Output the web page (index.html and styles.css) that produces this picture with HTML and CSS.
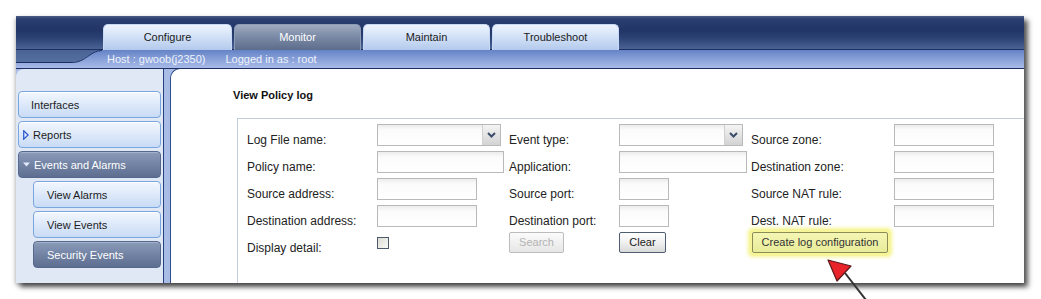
FILE: index.html
```html
<!DOCTYPE html>
<html>
<head>
<meta charset="utf-8">
<title>View Policy log</title>
<link rel="stylesheet" href="styles.css">
</head>
<body>
<div class="page">
  <div class="window">
    <div class="header">
      <div class="tab tab-light tab-w1">Configure</div>
      <div class="tab tab-dark tab-w2">Monitor</div>
      <div class="tab tab-light tab-w3">Maintain</div>
      <div class="tab tab-light tab-w3">Troubleshoot</div>
    </div>
    <div class="subbar">
      <svg class="notch" width="92" height="19" viewBox="0 0 92 19">
        <defs>
          <linearGradient id="ng" x1="0" y1="0" x2="0" y2="1">
            <stop offset="0" stop-color="#4a6395"/>
            <stop offset="1" stop-color="#566fa2"/>
          </linearGradient>
        </defs>
        <path d="M0 0 H86 C74 0 70 12 56 12 H0 Z" fill="url(#ng)"/>
        <path d="M86 0.5 C74 0.5 70 12.5 56 12.5 H0" fill="none" stroke="#1c2f60" stroke-width="1"/>
      </svg>
      <span class="host">Host : gwoob(j2350)</span>
      <span class="user">Logged in as : root</span>
    </div>
    <div class="body">
      <nav class="side">
        <div class="nav-item">Interfaces</div>
        <div class="nav-item nav-icon">
          <svg class="tri" width="6" height="10" viewBox="0 0 6 10"><path d="M0.7 0.8 L5.2 5 L0.7 9.2 Z" fill="none" stroke="#2a55cf" stroke-width="1.2"/></svg>Reports
        </div>
        <div class="nav-item nav-icon nav-sel">
          <svg class="tri" width="7" height="5" viewBox="0 0 7 5"><path d="M0 0.5 H7 L3.5 4.5 Z" fill="#dfe9fb"/></svg>Events and Alarms
        </div>
        <div class="nav-item nav-sub">View Alarms</div>
        <div class="nav-item nav-sub">View Events</div>
        <div class="nav-item nav-sub nav-sel">Security Events</div>
      </nav>
      <main class="content">
        <div class="title">View Policy log</div>
        <div class="filters">
          <div class="grid">
            <label class="lbl">Log File name:</label>
            <div class="select sel-w1"><span class="drop"><svg width="9" height="6" viewBox="0 0 9 6"><path d="M1 1 L4.5 4.5 L8 1" fill="none" stroke="#3b4d6b" stroke-width="2"/></svg></span></div>
            <label class="lbl">Event type:</label>
            <div class="select sel-w1"><span class="drop"><svg width="9" height="6" viewBox="0 0 9 6"><path d="M1 1 L4.5 4.5 L8 1" fill="none" stroke="#3b4d6b" stroke-width="2"/></svg></span></div>
            <label class="lbl">Source zone:</label>
            <div class="input w100"></div>

            <label class="lbl">Policy name:</label>
            <div class="input w127"></div>
            <label class="lbl">Application:</label>
            <div class="input w128"></div>
            <label class="lbl">Destination zone:</label>
            <div class="input w100"></div>

            <label class="lbl">Source address:</label>
            <div class="input w100"></div>
            <label class="lbl">Source port:</label>
            <div class="input w50"></div>
            <label class="lbl">Source NAT rule:</label>
            <div class="input w100"></div>

            <label class="lbl">Destination address:</label>
            <div class="input w100"></div>
            <label class="lbl">Destination port:</label>
            <div class="input w50"></div>
            <label class="lbl">Dest. NAT rule:</label>
            <div class="input w100"></div>

            <label class="lbl">Display detail:</label>
            <div class="check"></div>
            <div class="btn btn-disabled btn-search">Search</div>
            <div class="btn btn-clear">Clear</div>
            <div class="btn-wrap"><div class="btn btn-create">Create log configuration</div></div>
            <div></div>
          </div>
        </div>
      </main>
    </div>
  </div>
  <svg class="arrow" width="60" height="46" viewBox="0 0 60 46">
    <path d="M25 18 L46 45" stroke="#333" stroke-width="2" fill="none"/>
    <path d="M8 5 L31 11 L17 26 Z" fill="#e8232a" stroke="#5a1a1a" stroke-width="1.2" stroke-linejoin="round"/>
  </svg>
</div>
</body>
</html>
```

FILE: styles.css
```css
html, body {
  margin: 0;
  padding: 0;
  background: #ffffff;
}

.page {
  position: relative;
  width: 1041px;
  height: 299px;
  overflow: hidden;
  font-family: "Liberation Sans", Arial, sans-serif;
}

.window {
  margin: 16px 0 0 16px;
  width: 1008px;
  height: 267px;
  box-shadow: 4px 4px 5px rgba(0, 0, 0, 0.65), -1px 2px 4px rgba(0, 0, 0, 0.25);
  overflow: hidden;
  display: flex;
  flex-direction: column;
}

/* header with tabs */
.header {
  height: 34px;
  box-sizing: border-box;
  padding: 8px 0 0 87px;
  display: flex;
  gap: 2px;
  background: linear-gradient(#4d5e84 0, #2a3f70 3px, #213667 14px, #2b4273 22px, #4a6395 100%);
  border-bottom: 1px solid #1c2f60;
}

.tab {
  height: 26px;
  box-sizing: border-box;
  border-radius: 5px 5px 0 0;
  font-size: 11px;
  line-height: 25px;
  text-align: center;
  border: 1px solid #8fb0e2;
  border-bottom: none;
}

.tab-w1 { width: 129px; }
.tab-w2 { width: 127px; }
.tab-w3 { width: 127px; }

.tab-light {
  background: linear-gradient(#eef4fd 0, #d6e4f8 40%, #b3c9ec 100%);
  color: #1b1b1b;
  border-color: #c7d9f5;
}

.tab-dark {
  background: linear-gradient(#9eaac0 0, #7f8ea9 40%, #5c6c8b 100%);
  color: #ffffff;
  border-color: #8e9bb5;
}

/* host bar */
.subbar {
  position: relative;
  height: 19px;
  box-sizing: border-box;
  padding-left: 91px;
  display: flex;
  align-items: center;
  background: linear-gradient(#6483c6, #8ea5db 60%, #a8bae8);
  border-bottom: 1px solid #1c2f60;
  font-size: 11px;
  color: #eef3fc;
}

.notch {
  position: absolute;
  left: 0;
  top: 0;
}

.host { position: relative; }
.user { margin-left: 20px; }

/* body */
.body {
  flex: 1;
  display: flex;
  gap: 6px;
  background: #a9bce6;
  min-height: 0;
}

.side {
  width: 148px;
  box-sizing: border-box;
  background: #e0e8f6;
  border-right: 1px solid #24407e;
  border-top-left-radius: 8px;
  padding-top: 22px;
}

.nav-item {
  height: 27px;
  width: 143px;
  box-sizing: border-box;
  margin: 0 0 3px 2px;
  padding-left: 12px;
  display: flex;
  align-items: center;
  border: 1px solid #79a6de;
  border-radius: 4px;
  background: linear-gradient(#f2f7fe 0, #dfeafa 45%, #c8dbf5 100%);
  box-shadow: inset 0 1px 0 #ffffff;
  font-size: 11px;
  color: #1d1d1d;
}

.nav-icon { padding-left: 4px; }

.tri {
  margin-right: 4px;
  flex: none;
}

.nav-sub {
  width: 128px;
  margin-left: 17px;
  padding-left: 13px;
}

.nav-sel {
  background: linear-gradient(#8b9cba 0, #7485a6 45%, #5d6e90 100%);
  border-color: #56688c;
  box-shadow: inset 0 1px 0 #a4b2cc;
  color: #ffffff;
}

/* content */
.content {
  flex: 1;
  background: #ffffff;
  border-left: 1px solid #2f4f8f;
  border-top: 1px solid #2f4f8f;
  margin-top: -1px;
  border-top-left-radius: 10px;
  overflow: hidden;
  padding: 19px 0 0 62px;
  box-sizing: border-box;
}

.title {
  font-size: 11px;
  font-weight: bold;
  line-height: 14px;
  color: #111;
}

.filters {
  margin: 16px 0 0 4px;
  width: 900px;
  height: 200px;
  box-sizing: border-box;
  border: 1px solid #c3cdd9;
}

.grid {
  display: grid;
  grid-template-columns: 130px 132px 110px 132px 143px 1fr;
  grid-auto-rows: 22px;
  row-gap: 5px;
  padding: 5px 0 0 9px;
}

.lbl {
  align-self: end;
  font-size: 12px;
  line-height: 14px;
  margin-bottom: -1px;
  color: #222;
  white-space: nowrap;
}

.input, .select {
  height: 22px;
  box-sizing: border-box;
  border: 1px solid #b9b9b9;
  background: linear-gradient(#ececec 0, #fbfbfb 5px, #ffffff 100%);
}

.w50 { width: 50px; }
.w100 { width: 100px; }
.w127 { width: 127px; }
.w128 { width: 128px; }
.sel-w1 { width: 124px; }

.select {
  display: flex;
  justify-content: flex-end;
}

.drop {
  width: 17px;
  height: 20px;
  display: flex;
  align-items: center;
  justify-content: center;
  background: linear-gradient(#f4f4f4, #d3d3d3);
  border-left: 1px solid #d0d0d0;
}

.check {
  align-self: center;
  width: 12px;
  height: 12px;
  box-sizing: border-box;
  border: 1px solid #4c5b6b;
  background: linear-gradient(135deg, #dcdcd4, #fafafa);
}

.btn {
  align-self: start;
  height: 21px;
  box-sizing: border-box;
  border-radius: 2px;
  font-size: 11px;
  line-height: 19px;
  text-align: center;
}

.btn-search {
  width: 55px;
}

.btn-disabled {
  border: 1px solid #bcbcbc;
  background: linear-gradient(#fbfbfb, #e6e6e6);
  color: #b3b3b3;
}

.btn-clear {
  width: 47px;
  border: 1px solid #4e5d72;
  background: linear-gradient(#ffffff, #f0f0f0 50%, #d9d9d9);
  color: #1a1a1a;
}

.btn-wrap {
  align-self: start;
  justify-self: start;
  margin-left: 1px;
}

.btn-create {
  width: 136px;
  border: 1px solid #8c8c55;
  background: linear-gradient(#f4f6b4, #e8ec98);
  color: #333;
  box-shadow: 0 0 0 3px #f6f59a, 0 0 3px 5px #f9f8b8;
}

.arrow {
  position: absolute;
  left: 820px;
  top: 255px;
}
```
